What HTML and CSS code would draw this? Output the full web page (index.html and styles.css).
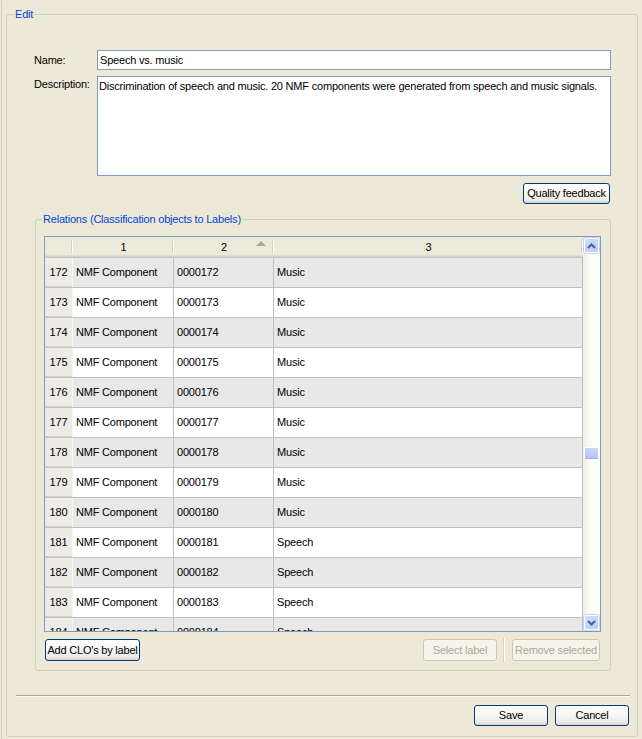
FILE: index.html
```html
<!DOCTYPE html>
<html>
<head>
<meta charset="utf-8">
<link rel="stylesheet" href="styles.css">
</head>
<body>
<div class="page">
  <div class="group edit">
    <span class="group-title">Edit</span>
    <div class="form">
      <div class="field-row">
        <span class="label">Name:</span>
        <div class="input">Speech vs. music</div>
      </div>
      <div class="field-row desc-row">
        <span class="label label-top">Description:</span>
        <div class="textarea">Discrimination of speech and music. 20 NMF components were generated from speech and music signals.</div>
      </div>
      <div class="qf-row"><button class="btn btn-qf">Quality feedback</button></div>

      <div class="group relations">
        <span class="group-title rel-title">Relations (Classification objects to Labels)</span>
        <div class="table">
          <div class="grid">
            <div class="thead">
              <div class="hcell c0"></div>
              <div class="hcell c1">1</div>
              <div class="hcell c2">2<span class="sort-arrow"></span></div>
              <div class="hcell c3">3</div>
            </div>
            <div class="tbody">
              <div class="row alt"><div class="cell c0 num">172</div><div class="cell c1">NMF Component</div><div class="cell c2">0000172</div><div class="cell c3">Music</div></div>
              <div class="row"><div class="cell c0 num">173</div><div class="cell c1">NMF Component</div><div class="cell c2">0000173</div><div class="cell c3">Music</div></div>
              <div class="row alt"><div class="cell c0 num">174</div><div class="cell c1">NMF Component</div><div class="cell c2">0000174</div><div class="cell c3">Music</div></div>
              <div class="row"><div class="cell c0 num">175</div><div class="cell c1">NMF Component</div><div class="cell c2">0000175</div><div class="cell c3">Music</div></div>
              <div class="row alt"><div class="cell c0 num">176</div><div class="cell c1">NMF Component</div><div class="cell c2">0000176</div><div class="cell c3">Music</div></div>
              <div class="row"><div class="cell c0 num">177</div><div class="cell c1">NMF Component</div><div class="cell c2">0000177</div><div class="cell c3">Music</div></div>
              <div class="row alt"><div class="cell c0 num">178</div><div class="cell c1">NMF Component</div><div class="cell c2">0000178</div><div class="cell c3">Music</div></div>
              <div class="row"><div class="cell c0 num">179</div><div class="cell c1">NMF Component</div><div class="cell c2">0000179</div><div class="cell c3">Music</div></div>
              <div class="row alt"><div class="cell c0 num">180</div><div class="cell c1">NMF Component</div><div class="cell c2">0000180</div><div class="cell c3">Music</div></div>
              <div class="row"><div class="cell c0 num">181</div><div class="cell c1">NMF Component</div><div class="cell c2">0000181</div><div class="cell c3">Speech</div></div>
              <div class="row alt"><div class="cell c0 num">182</div><div class="cell c1">NMF Component</div><div class="cell c2">0000182</div><div class="cell c3">Speech</div></div>
              <div class="row"><div class="cell c0 num">183</div><div class="cell c1">NMF Component</div><div class="cell c2">0000183</div><div class="cell c3">Speech</div></div>
              <div class="row alt"><div class="cell c0 num">184</div><div class="cell c1">NMF Component</div><div class="cell c2">0000184</div><div class="cell c3">Speech</div></div>
            </div>
          </div>
          <div class="vscroll">
            <div class="sbtn">
              <svg width="9" height="6" viewBox="0 0 9 6"><path d="M1 5 L4.5 1.5 L8 5" fill="none" stroke="#4D6185" stroke-width="2"/></svg>
            </div>
            <div class="track"><div class="thumb"></div></div>
            <div class="sbtn">
              <svg width="9" height="6" viewBox="0 0 9 6"><path d="M1 1 L4.5 4.5 L8 1" fill="none" stroke="#4D6185" stroke-width="2"/></svg>
            </div>
          </div>
        </div>
        <div class="rel-buttons">
          <button class="btn btn-add">Add CLO's by label</button>
          <span class="spacer"></span>
          <button class="btn btn-select" disabled>Select label</button>
          <span class="vsep"></span>
          <button class="btn btn-remove" disabled>Remove selected</button>
        </div>
      </div>
    </div>
    <div class="hsep"></div>
    <div class="dialog-buttons">
      <button class="btn btn-dlg">Save</button>
      <button class="btn btn-dlg">Cancel</button>
    </div>
  </div>
</div>
</body>
</html>
```

FILE: styles.css
```css
html, body {
  margin: 0;
  padding: 0;
}
body {
  background: #ECE9D8;
  font-family: "Liberation Sans", Arial, sans-serif;
  font-size: 11px;
  letter-spacing: -0.2px;
  color: #000;
  width: 642px;
  height: 739px;
  overflow: hidden;
}
.page {
  margin-left: 1px;
  border-left: 1px solid #D0D0BF;
  padding-left: 4px;
  padding-top: 14px;
  height: 739px;
  box-sizing: border-box;
}
.group {
  position: relative;
  border: 1px solid #D0D0BF;
  border-radius: 3px;
  box-sizing: border-box;
}
.edit {
  width: 632px;
  height: 723px;
}
.group-title {
  position: absolute;
  top: -8px;
  left: 7px;
  padding: 0 1px;
  line-height: 14px;
  background: #ECE9D8;
  color: #0046D5;
  white-space: nowrap;
}
.rel-title {
  left: 6px;
}
.form {
  padding: 35px 26px 0 27px;
}
.field-row {
  display: flex;
  align-items: center;
}
.desc-row {
  margin-top: 6px;
  align-items: flex-start;
}
.label {
  width: 63px;
  flex: none;
}
.label-top {
  padding-top: 2px;
}
.input {
  width: 514px;
  height: 20px;
  box-sizing: border-box;
  border: 1px solid #7F9DB9;
  background: #fff;
  padding-left: 2px;
  line-height: 18px;
  white-space: nowrap;
}
.textarea {
  width: 514px;
  height: 100px;
  box-sizing: border-box;
  border: 1px solid #7F9DB9;
  background: #fff;
  padding: 2px 1px;
  line-height: 15px;
}
.qf-row {
  display: flex;
  justify-content: flex-end;
  margin-top: 7px;
  padding-right: 1px;
}
.btn {
  font-family: "Liberation Sans", Arial, sans-serif;
  font-size: 11px;
  letter-spacing: -0.2px;
  color: #000;
  height: 21px;
  box-sizing: border-box;
  border: 1px solid #003C74;
  border-radius: 3px;
  background: linear-gradient(to bottom, #FFFFFF 0%, #F7F7F4 45%, #ECEBE6 85%, #D6D0C5 100%);
  padding: 0;
  margin: 0;
  line-height: 17px;
  white-space: nowrap;
}
.btn:disabled {
  border-color: #C9C7BA;
  background: #F5F4EA;
  color: #ACA899;
}
.btn-qf {
  width: 87px;
}
.relations {
  margin-top: 15px;
  margin-left: 1px;
  width: 576px;
  height: 452px;
  padding: 16px 9px 9px 8px;
}
.table {
  width: 557px;
  height: 396px;
  box-sizing: border-box;
  border: 1px solid #7F9DB9;
  display: flex;
  background: #fff;
}
.grid {
  width: 538px;
  overflow: hidden;
}
.thead {
  display: flex;
  height: 21px;
  background: #EBEADB;
  box-shadow: inset 0 -1px #CBC7B8, inset 0 -2px #D6D2C2, inset 0 -3px #E2DECD;
}
.hcell {
  position: relative;
  box-sizing: border-box;
  text-align: center;
  line-height: 19px;
  padding-top: 1px;
}
.hcell::after {
  content: "";
  position: absolute;
  right: 0;
  top: 3px;
  bottom: 5px;
  width: 1px;
  background: #fff;
  box-shadow: -1px 0 #D6D2C2;
}
.c0 { width: 28px; flex: none; }
.c1 { width: 101px; flex: none; }
.c2 { width: 100px; flex: none; }
.c3 { width: 309px; flex: none; }
.sort-arrow {
  position: absolute;
  left: 82px;
  top: 4px;
  width: 0;
  height: 0;
  border-left: 5px solid transparent;
  border-right: 5px solid transparent;
  border-bottom: 5px solid #ACA899;
}
.row {
  display: flex;
  height: 30px;
  box-sizing: border-box;
  border-bottom: 1px solid #C0C0C0;
  background: #fff;
}
.row.alt {
  background: #E8E8E8;
}
.cell {
  box-sizing: border-box;
  border-right: 1px solid #C0C0C0;
  padding-left: 3px;
  line-height: 29px;
  white-space: nowrap;
  overflow: hidden;
}
.cell.num {
  padding-left: 0;
  text-align: center;
  background: #ECEBE5;
  border-right-color: #F7F7F2;
  box-shadow: inset 0 -1px #D6D2C2;
}
.vscroll {
  width: 17px;
  flex: none;
  display: flex;
  flex-direction: column;
  background: linear-gradient(to right, #EEEDE5, #FBFBF8 40%, #FEFEFB);
}
.sbtn {
  width: 15px;
  height: 15px;
  margin: 1px;
  box-sizing: border-box;
  border: 1px solid #FFFFFF;
  border-radius: 2px;
  background: linear-gradient(to bottom right, #D0DDFC, #B9CBF8);
  box-shadow: 0 0 0 1px #C4D3F5;
  display: flex;
  align-items: center;
  justify-content: center;
}
.track {
  flex: 1;
}
.thumb {
  margin: 193px 1px 0;
  height: 12px;
  box-sizing: border-box;
  border: 1px solid #FFFFFF;
  border-bottom-color: #9CB3EA;
  border-radius: 2px;
  background: linear-gradient(to bottom, #C8D6FB, #B4C8F7);
}
.rel-buttons {
  display: flex;
  align-items: center;
  margin-top: 7px;
  padding: 0 1px;
  height: 22px;
}
.rel-buttons .btn {
  height: 22px;
  line-height: 18px;
}
.btn-add { width: 95px; }
.spacer { flex: 1; }
.btn-select { width: 74px; }
.btn-remove { width: 88px; }
.vsep {
  width: 1px;
  height: 24px;
  margin: 0 8px 0 6px;
  background: #D6D2C2;
  box-shadow: 1px 0 #FFFFFF;
}
.hsep {
  margin: 24px 7px 0 9px;
  height: 1px;
  background: #ACA899;
  border-bottom: 1px solid #FFFFFF;
}
.dialog-buttons {
  display: flex;
  justify-content: flex-end;
  gap: 7px;
  margin-top: 8px;
  padding-right: 8px;
}
.btn-dlg {
  width: 74px;
}
```
